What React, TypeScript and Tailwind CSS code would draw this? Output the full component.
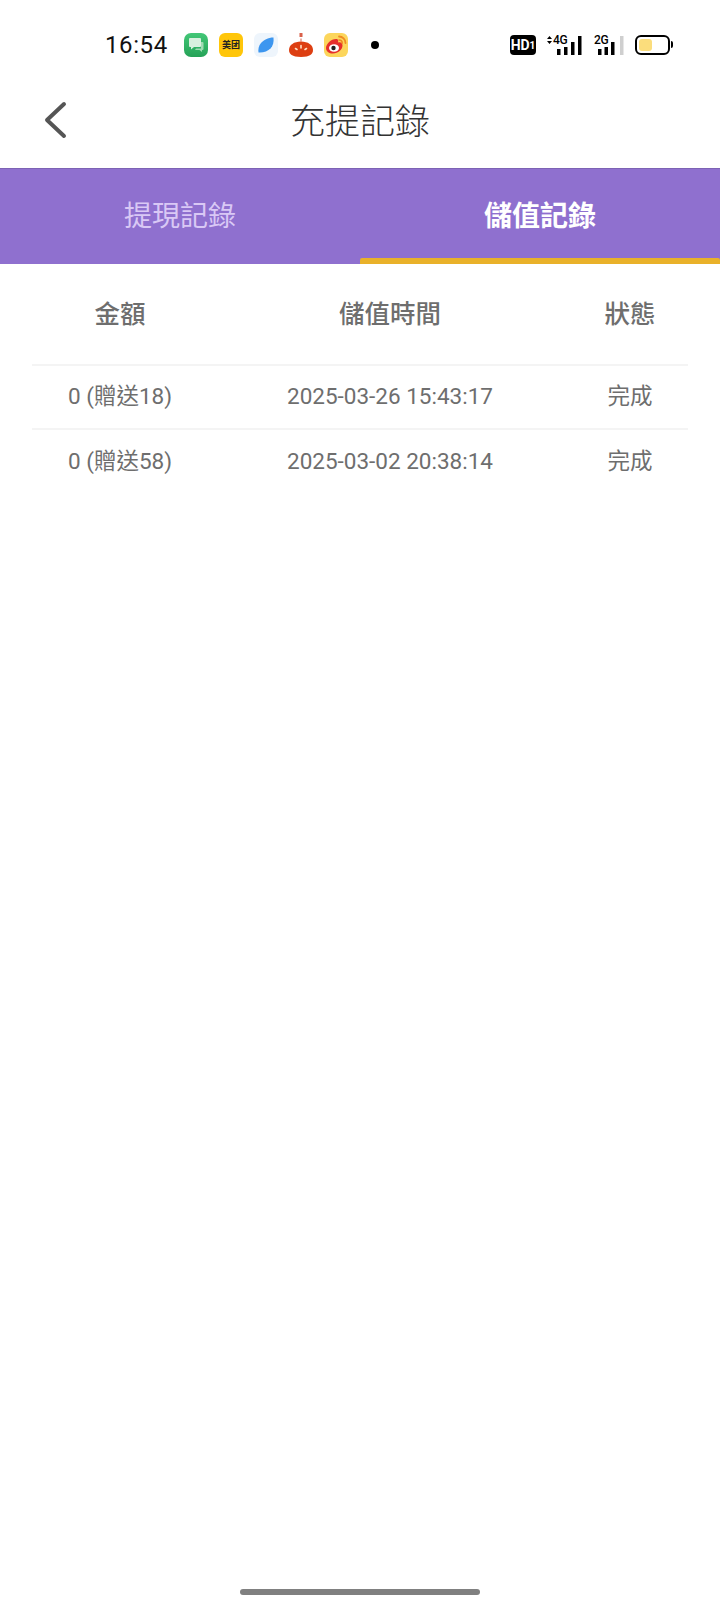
import React from 'react';

const rows = [
  { amount: '0 (贈送18)', time: '2025-03-26 15:43:17', status: '完成' },
  { amount: '0 (贈送58)', time: '2025-03-02 20:38:14', status: '完成' },
];

const AppIcons = () => (
  <div className="flex items-center gap-[11px] ml-[17px]">
    {/* messages */}
    <svg width="24" height="24" viewBox="0 0 24 24">
      <defs>
        <linearGradient id="msg" x1="0" y1="0" x2="0" y2="1">
          <stop offset="0" stopColor="#43c777" />
          <stop offset="1" stopColor="#25a257" />
        </linearGradient>
      </defs>
      <rect width="24" height="24" rx="7" fill="url(#msg)" />
      <path d="M17 9h1.500a1 1 0 0 1 1 1v6a1 1 0 0 1-1 1H18v2l-2.500-2H11l1-1.500h5z" fill="#9fdcb3" />
      <path d="M6 5h10a1 1 0 0 1 1 1v7a1 1 0 0 1-1 1h-6l-3 2.500V14H6a1 1 0 0 1-1-1V6a1 1 0 0 1 1-1z" fill="#d9f0df" />
    </svg>
    {/* meituan */}
    <div className="w-[24px] h-[24px] rounded-[6px] bg-[#ffc60a] flex items-center justify-center text-[9px] font-bold text-[#222] font-['Noto_Sans_CJK_SC',sans-serif] leading-none">
      美团
    </div>
    {/* blue leaf */}
    <svg width="24" height="24" viewBox="0 0 24 24">
      <rect width="24" height="24" rx="6" fill="#eef5fc" />
      <path d="M4.500 19.500c-.5-3 0-6.500 2.500-9.500C9.500 7 14 4.500 19.500 4.500c.5 4.500-.5 8.500-3 11-2.500 2.500-7.500 4.500-12 4z" fill="#3d96ef" />
    </svg>
    {/* red dome */}
    <svg width="24" height="24" viewBox="0 0 24 24">
      <rect x="10.500" y="0" width="3" height="4" fill="#d9604a" />
      <path d="M12 5.500v3" stroke="#d9604a" strokeWidth="1" />
      <path d="M0 17c0-5 5-8.500 12-8.500S24 12 24 17c0 4-3 7-12 7S0 21 0 17z" fill="#dd3f12" />
      <path d="M6.500 15.500l1.500 1M12 12.500v2.500M17.500 15.500l-1.500 1" stroke="#ffe0c4" strokeWidth="1.600" strokeLinecap="round" />
    </svg>
    {/* weibo */}
    <svg width="24" height="24" viewBox="0 0 24 24">
      <rect width="24" height="24" rx="6" fill="#fcd65c" />
      <path d="M2 15c0-4 5-9 10-9 2.500 0 2.500 2 2 3.500 2.500-.5 4.500 0 4.500 3 0 4-4.500 8-9.500 8C5 20.500 2 18.500 2 15z" fill="#e6302c" />
      <ellipse cx="10" cy="15" rx="5" ry="3.800" fill="#fff" />
      <circle cx="9.500" cy="15" r="2.200" fill="#222" />
      <path d="M15 3.500a6.500 6.500 0 0 1 6.500 6.500" stroke="#f08a24" strokeWidth="1.800" fill="none" strokeLinecap="round" />
      <path d="M15 7a3.200 3.200 0 0 1 3.200 3.200" stroke="#f08a24" strokeWidth="1.600" fill="none" strokeLinecap="round" />
    </svg>
  </div>
);

const StatusBar = () => (
  <div className="h-[88px] flex items-center pl-[105px] pr-[47px] pt-[1px] font-['Roboto',sans-serif]">
    <span className="text-[24px] tracking-[0.6px] text-[#111] leading-none w-[62px]">16:54</span>
    <AppIcons />
    <span className="w-[8px] h-[8px] rounded-full bg-black ml-[23px]" />
    <div className="ml-auto flex items-center">
      <div className="w-[26px] h-[20px] rounded-[4px] bg-black text-white text-[14px] font-bold leading-none flex items-center justify-center">
        HD<span className="text-[10px] mt-[2px]">1</span>
      </div>
      <div className="relative ml-[10px] w-[36px] h-[20px]">
        <svg width="36" height="20" viewBox="0 0 36 20" className="absolute left-0 top-0">
          <path d="M1 4l2.500-3L6 4zM1 6l2.500 3L6 6z" fill="#000" />
          <rect x="11" y="14" width="3.500" height="6" fill="#000" />
          <rect x="18" y="12" width="3.500" height="8" fill="#000" />
          <rect x="25" y="7" width="3.500" height="13" fill="#000" />
          <rect x="32" y="1" width="3.500" height="19" fill="#000" />
        </svg>
        <span className="absolute left-[7px] -top-[1px] text-[12px] font-medium leading-none tracking-[-0.3px] text-black bg-white pr-[1px]">4G</span>
      </div>
      <div className="relative ml-[12px] w-[30px] h-[20px]">
        <svg width="30" height="20" viewBox="0 0 30 20" className="absolute left-0 top-0">
          <rect x="4" y="14" width="3.500" height="6" fill="#000" />
          <rect x="10.500" y="12" width="3.500" height="8" fill="#000" />
          <rect x="17" y="7" width="3.500" height="13" fill="#000" />
          <rect x="26" y="1" width="3.500" height="19" fill="#cfcfcf" />
        </svg>
        <span className="absolute left-0 -top-[1px] text-[12px] font-medium leading-none tracking-[-0.3px] text-black bg-white pr-[1px]">2G</span>
      </div>
      <div className="ml-[11px] flex items-center">
        <div className="w-[35px] h-[20px] rounded-[6px] border-2 border-black p-[2px]">
          <div className="w-[13px] h-full rounded-[3px] bg-[#fbdd7c]" />
        </div>
        <div className="w-[2px] h-[7px] bg-black ml-[1px] rounded-r-sm" />
      </div>
    </div>
  </div>
);

export default function App() {
  return (
    <div className="w-[720px] h-[1600px] bg-white flex flex-col relative font-['Roboto','Noto_Sans_CJK_TC',sans-serif]">
      <StatusBar />

      {/* Header */}
      <div className="h-[80px] flex items-center justify-center relative">
        <svg width="26" height="38" viewBox="0 0 26 38" className="absolute left-[42px] top-[13px]">
          <path d="M22 3L5 19l17 16" fill="none" stroke="#555" strokeWidth="4" strokeLinecap="round" strokeLinejoin="round" />
        </svg>
        <h1 className="text-[35px] font-light text-[#333] leading-none mb-[12px]">充提記錄</h1>
      </div>

      {/* Tabs */}
      <div className="h-[96px] bg-[#8f70cf] flex border-t border-[#7d62b4]">
        <div className="w-1/2 flex items-center justify-center text-[28px] text-[#d9c8f5]">提現記錄</div>
        <div className="w-1/2 flex items-center justify-center text-[28px] font-bold text-white relative">
          儲值記錄
          <div className="absolute left-0 right-0 bottom-0 h-[6px] bg-[#e9b12a] rounded-t-[2px]" />
        </div>
      </div>

      {/* Table */}
      <div className="mx-[32px]">
        <div className="grid grid-cols-[176px_364px_116px] h-[102px] items-center text-center text-[25.5px] font-medium text-[#6e6e6e] border-b-2 border-[#f4f4f4]">
          <div>金額</div>
          <div>儲值時間</div>
          <div>狀態</div>
        </div>
        {rows.map((row, index) => (
          <div
            key={index}
            className={`grid grid-cols-[176px_364px_116px] h-[64px] items-center text-center text-[22.5px] text-[#6e6e6e] ${index === 0 ? 'border-b-2 border-[#f4f4f4]' : ''}`}
          >
            <div>{row.amount}</div>
            <div>{row.time}</div>
            <div>{row.status}</div>
          </div>
        ))}
      </div>

      {/* Home indicator */}
      <div className="absolute left-[240px] bottom-[5px] w-[240px] h-[6px] rounded-full bg-[#808080]" />
    </div>
  );
}
